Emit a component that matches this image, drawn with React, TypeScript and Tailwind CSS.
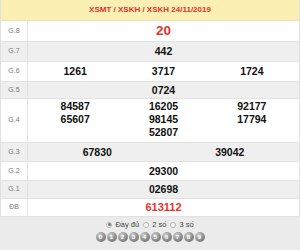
const rows: { label: string; h: string; bg: string; cols: string[][]; tone?: string }[] = [
  { label: "G.8", h: "h-[21px]", bg: "bg-white", cols: [["20"]], tone: "text-[#e8312b] text-[13.5px]" },
  { label: "G.7", h: "h-[20px]", bg: "bg-[#efefef]", cols: [["442"]] },
  { label: "G.6", h: "h-[20px]", bg: "bg-white", cols: [["1261"], ["3717"], ["1724"]] },
  { label: "G.5", h: "h-[17px]", bg: "bg-[#efefef]", cols: [["0724"]] },
  {
    label: "G.4",
    h: "h-[44px]",
    bg: "bg-white",
    cols: [
      ["84587", "65607"],
      ["16205", "98145", "52807"],
      ["92177", "17794"],
    ],
  },
  { label: "G.3", h: "h-[19px]", bg: "bg-[#efefef]", cols: [["67830"], ["39042"]] },
  { label: "G.2", h: "h-[19px]", bg: "bg-white", cols: [["29300"]] },
  { label: "G.1", h: "h-[18px]", bg: "bg-[#efefef]", cols: [["02698"]] },
  { label: "ĐB", h: "h-[18px]", bg: "bg-white", cols: [["613112"]], tone: "text-[#e8312b] text-[11px]" },
];

function Radio({ checked }: { checked?: boolean }) {
  return (
    <span className="w-[6px] h-[6px] rounded-full border border-[#b5b5b5] bg-[#f7f7f7] flex items-center justify-center">
      {checked && <span className="w-[3px] h-[3px] rounded-full bg-[#777]" />}
    </span>
  );
}

export default function App() {
  return (
    <div className="w-[300px] h-[250px] bg-[#ebebeb] font-['Liberation_Sans',Arial,sans-serif] overflow-hidden">
      <div className="border-x border-[#e0e0e0]">
        <div className="h-[21px] bg-[#fcefb4] border-b border-[#e6e0c4] flex items-center justify-center text-[8px] font-bold text-[#e8312b]">
          XSMT / XSKH / XSKH 24/11/2019
        </div>
        {rows.map((r) => {
          const multi = r.cols.some((c) => c.length > 1);
          return (
            <div key={r.label} className={`flex ${r.h} ${r.bg} border-b border-[#e2e2e2]`}>
              <div className="w-[27px] shrink-0 border-r border-[#e2e2e2] flex items-center justify-center text-[7px] text-[#777]">
                {r.label}
              </div>
              <div className="flex-1 flex px-[3px]">
                {r.cols.map((c, i) => (
                  <div
                    key={i}
                    className={`flex-1 flex flex-col items-center font-bold ${
                      multi ? "justify-start pt-px leading-[13px]" : "justify-center leading-none"
                    } ${r.tone ?? "text-[#111] text-[10.5px]"}`}
                  >
                    {c.map((n) => (
                      <span key={n}>{n}</span>
                    ))}
                  </div>
                ))}
              </div>
            </div>
          );
        })}
      </div>
      <div className="flex flex-col items-center pt-[4px] gap-[3px]">
        <div className="flex items-center text-[7.5px] text-[#444] leading-none">
          <Radio checked />
          <span className="ml-[3px] mr-[4px]">Đầy đủ</span>
          <Radio />
          <span className="ml-[3px] mr-[4px]">2 số</span>
          <Radio />
          <span className="ml-[3px]">3 số</span>
        </div>
        <div className="flex gap-px">
          {["0", "1", "2", "3", "4", "5", "6", "7", "8", "9"].map((d) => (
            <span
              key={d}
              className="w-[10px] h-[10px] rounded-full bg-[radial-gradient(circle_at_35%_30%,#cfcfcf,#8c8c8c_55%,#666)] flex items-center justify-center text-[6px] font-bold text-white leading-none"
            >
              {d}
            </span>
          ))}
        </div>
      </div>
    </div>
  );
}
